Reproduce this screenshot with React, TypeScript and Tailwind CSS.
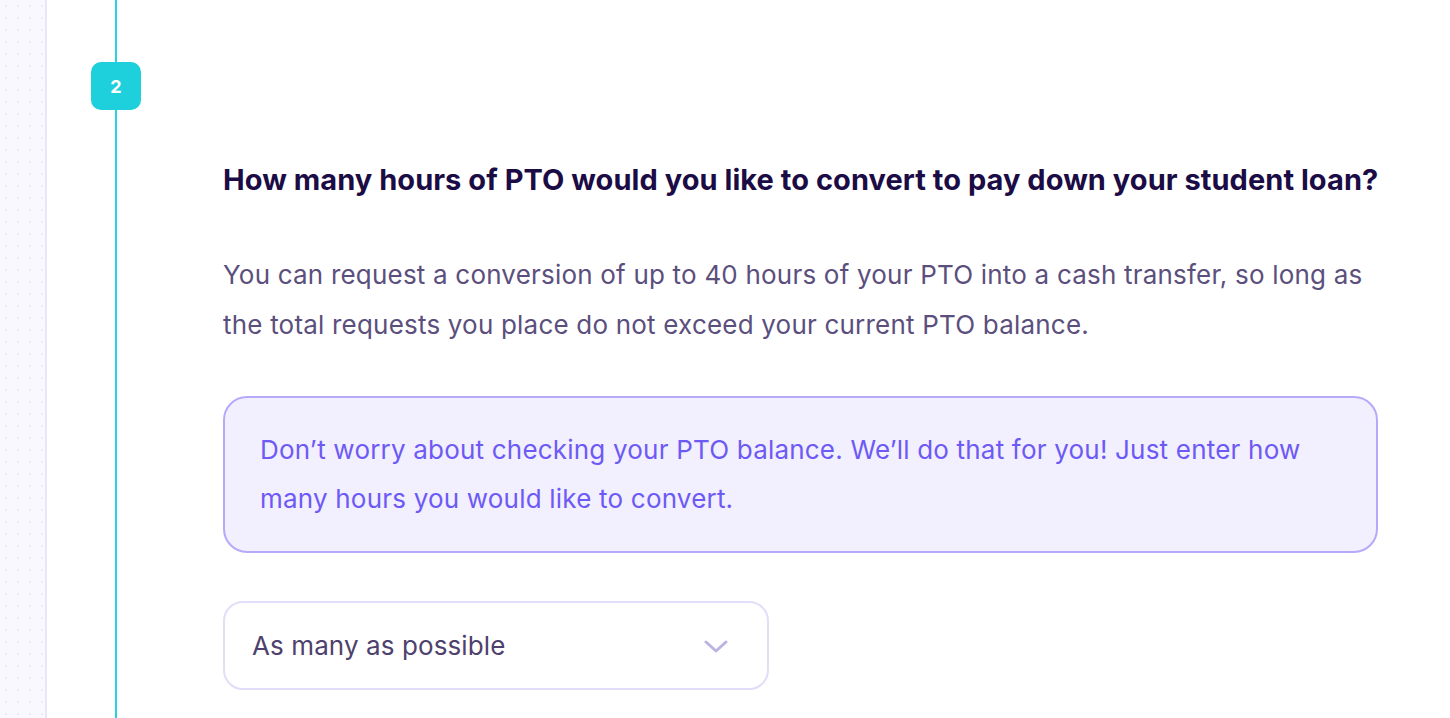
const App = () => {
    return (
        <div className="flex h-[718px] w-full overflow-hidden bg-white font-['Inter',sans-serif]">
            <aside className="w-[47px] shrink-0 border-r-2 border-[#e9e6fb] bg-[#f9f8fe] bg-[radial-gradient(#ebe8f7_1px,transparent_1px)] bg-[size:12px_12px]" />

            <div className="relative flex w-[138px] shrink-0 justify-center">
                <div className="absolute inset-y-0 left-1/2 w-[2px] -translate-x-1/2 bg-[#22d3e0]" />
                <div className="relative mt-[62px] flex h-[48px] w-[50px] items-center justify-center rounded-[10px] bg-[#1ed0dc] text-[18px] font-bold text-white">
                    2
                </div>
            </div>

            <main className="ml-[38px] w-[1155px] pt-[162px]">
                <h2 className="whitespace-nowrap text-[29px] font-bold leading-[36px] tracking-[0.05px] text-[#1b0c45]">
                    How many hours of PTO would you like to convert to pay down your student loan?
                </h2>

                <p className="mt-[52px] text-[26px] leading-[50px] tracking-[0.2px] text-[#5b4f7d]">
                    You can request a conversion of up to 40 hours of your PTO into a cash transfer, so long as the total requests you place do not exceed your current PTO balance.
                </p>

                <div className="mt-[46px] rounded-[24px] border-2 border-[#b7a9fa] bg-[#f2effe] pb-[28px] pl-[35px] pr-[40px] pt-[27px] text-[26px] leading-[49px] tracking-[0.2px] text-[#6d5af5]">
                    Don’t worry about checking your PTO balance. We’ll do that for you! Just enter how many hours you would like to convert.
                </div>

                <button className="mt-[48px] flex h-[89px] w-[546px] items-center justify-between rounded-[20px] border-2 border-[#e2ddf9] bg-white pl-[27px] pr-[39px] text-[26px] tracking-[0.1px] text-[#4e416d]">
                    <span>As many as possible</span>
                    <svg width="24" height="13" viewBox="0 0 24 13" fill="none" className="mt-[1px]">
                        <path d="M2 2l10 9 10-9" stroke="#bcb3e2" strokeWidth="3" strokeLinecap="round" strokeLinejoin="round" />
                    </svg>
                </button>
            </main>
        </div>
    );
};

export default App;
